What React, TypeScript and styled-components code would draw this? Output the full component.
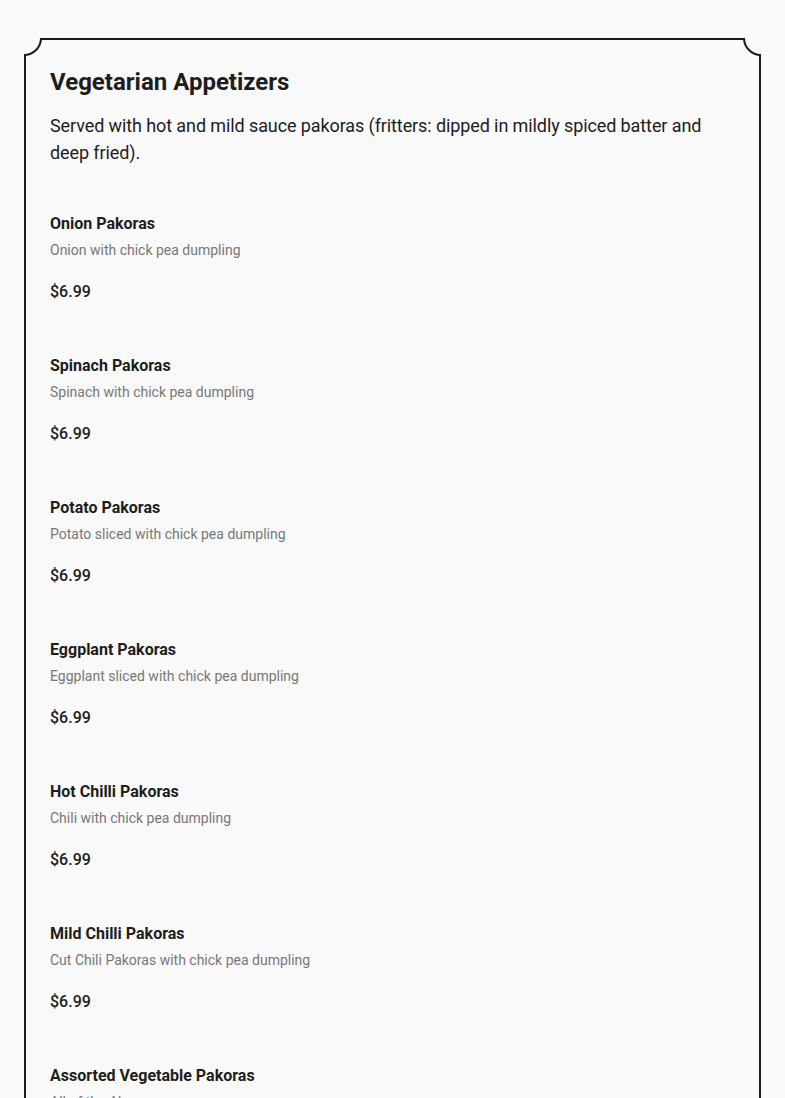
import React from 'react';
import styled, { createGlobalStyle } from 'styled-components';

const GlobalStyle = createGlobalStyle`
    html, body {
        margin: 0;
        padding: 0;
        background: #f9f9f9;
        font-family: Roboto, "Liberation Sans", Arial, sans-serif;
        color: #1d1d1d;
    }
`;

const SPage = styled.div`
    padding: 38px 24px 40px;
`;

const SCard = styled.section`
    position: relative;
    border: 2px solid #1b1b1b;
    padding: 27px 24px 40px;
    min-height: 1200px;

    &::before,
    &::after {
        content: '';
        position: absolute;
        top: -20px;
        width: 32px;
        height: 32px;
        border: 2px solid #1b1b1b;
        border-radius: 50%;
        background: #f9f9f9;
    }

    &::before {
        left: -20px;
        clip-path: inset(50% 0 0 50%);
    }

    &::after {
        right: -20px;
        clip-path: inset(50% 50% 0 0);
    }
`;

const STitle = styled.h2`
    margin: 0;
    font-size: 24px;
    line-height: 30px;
    font-weight: 700;
`;

const SIntro = styled.p`
    margin: 15px 0 0;
    font-size: 18px;
    line-height: 27px;
    font-weight: 400;
    letter-spacing: -0.1px;
`;

const SList = styled.div`
    display: flex;
    flex-direction: column;
    gap: 50px;
    margin-top: 46px;
`;

const SItem = styled.article`
    display: flex;
    flex-direction: column;
`;

const SItemName = styled.h3`
    margin: 0;
    font-size: 16px;
    line-height: 24px;
    font-weight: 700;
`;

const SItemDesc = styled.p`
    margin: 4px 0 0;
    font-size: 14px;
    line-height: 20px;
    color: #777777;
`;

const SPrice = styled.div`
    margin-top: 20px;
    font-size: 16px;
    line-height: 24px;
    font-weight: 500;
`;

const items = [
    { name: 'Onion Pakoras', desc: 'Onion with chick pea dumpling', price: '$6.99' },
    { name: 'Spinach Pakoras', desc: 'Spinach with chick pea dumpling', price: '$6.99' },
    { name: 'Potato Pakoras', desc: 'Potato sliced with chick pea dumpling', price: '$6.99' },
    { name: 'Eggplant Pakoras', desc: 'Eggplant sliced with chick pea dumpling', price: '$6.99' },
    { name: 'Hot Chilli Pakoras', desc: 'Chili with chick pea dumpling', price: '$6.99' },
    { name: 'Mild Chilli Pakoras', desc: 'Cut Chili Pakoras with chick pea dumpling', price: '$6.99' },
    { name: 'Assorted Vegetable Pakoras', desc: 'All of the Above', price: '$7.99' },
];

const App = () => {
    return (
        <SPage>
            <GlobalStyle />
            <SCard>
                <STitle>Vegetarian Appetizers</STitle>
                <SIntro>
                    Served with hot and mild sauce pakoras (fritters: dipped in mildly spiced batter and deep fried).
                </SIntro>
                <SList>
                    {items.map((item) => (
                        <SItem key={item.name}>
                            <SItemName>{item.name}</SItemName>
                            <SItemDesc>{item.desc}</SItemDesc>
                            <SPrice>{item.price}</SPrice>
                        </SItem>
                    ))}
                </SList>
            </SCard>
        </SPage>
    );
};

export default App;
